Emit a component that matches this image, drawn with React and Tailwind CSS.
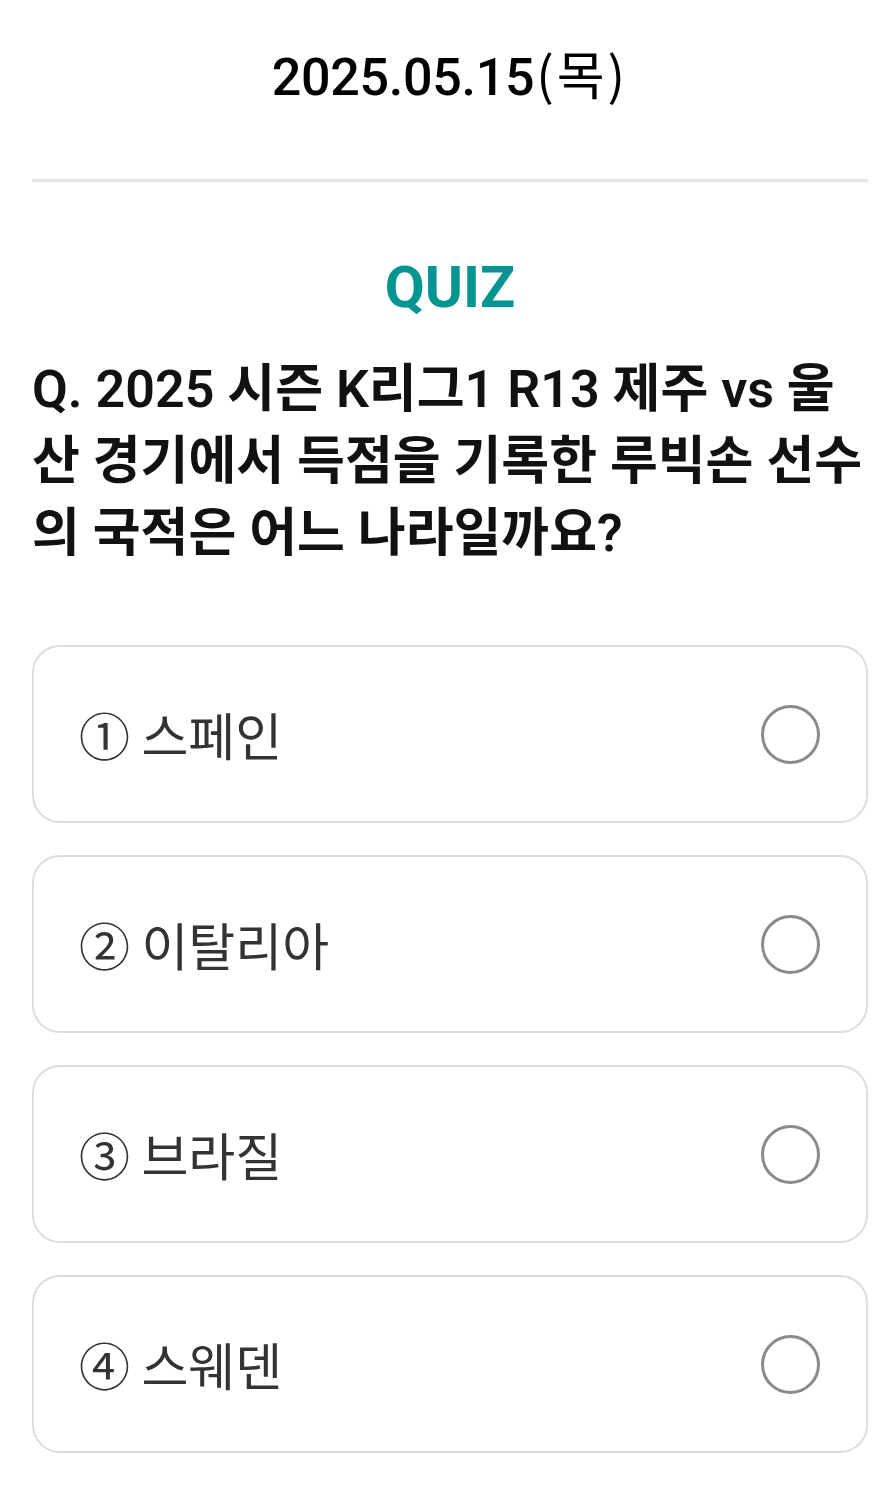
export default function App() {
  const options = ["① 스페인", "② 이탈리아", "③ 브라질", "④ 스웨덴"];
  const font = { fontFamily: "Roboto, 'Noto Sans CJK KR', sans-serif" };
  const cjk = { fontFamily: "'Noto Sans CJK KR', sans-serif" };
  return (
    <div className="min-h-[1501px] bg-white pl-8 pr-[28px]" style={font}>
      <div className="flex h-[182px] items-center justify-center border-b-[3px] border-[#e6e6e6] pb-[29px] text-black">
        <div className="flex items-baseline leading-none">
          <span className="text-[52px] font-medium tracking-[-0.3px]">2025.05.15</span>
          <span className="ml-[2px] text-[52px] font-normal tracking-[3px]" style={cjk}>(목)</span>
        </div>
      </div>
      <div className="mt-[75px] text-center text-[58px] font-bold leading-[60px] text-[#009590]">QUIZ</div>
      <div className="mt-[37px] text-[52px] font-semibold leading-[72px] text-[#111]">
        Q. 2025 시즌 K리그1 R13 제주 vs 울산 경기에서 득점을 기록한 루빅손 선수의 국적은 어느 나라일까요?
      </div>
      <div className="mt-[75px] flex flex-col gap-[32px]">
        {options.map((o) => (
          <div
            key={o}
            className="flex h-[178px] items-center justify-between rounded-[28px] border-2 border-[#dcdcdc] pl-[45px] pr-[46px]"
          >
            <span className="text-[51px] leading-[60px] text-[#333]" style={cjk}>{o}</span>
            <span className="h-[59px] w-[59px] rounded-full border-[3px] border-[#8a8a8a]" />
          </div>
        ))}
      </div>
    </div>
  );
}
